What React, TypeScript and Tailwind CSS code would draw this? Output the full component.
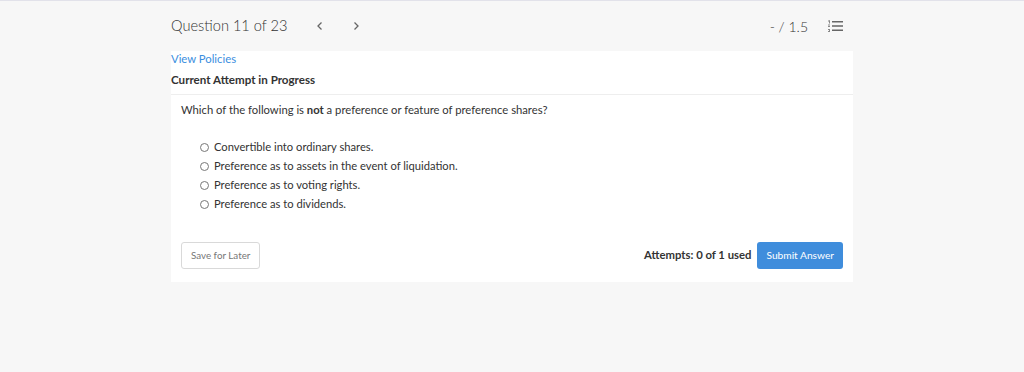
import React from "react";

export default function App() {
  const options = [
    "Convertible into ordinary shares.",
    "Preference as to assets in the event of liquidation.",
    "Preference as to voting rights.",
    "Preference as to dividends.",
  ];
  return (
    <div
      className="min-h-[372px] bg-[#f7f7f7] border-t border-[#e2e2ea] text-[#333]"
      style={{ fontFamily: "Lato, 'Open Sans', sans-serif" }}
    >
      <div className="w-[682px] mx-auto">
        <div className="h-[50px] flex items-center justify-between">
          <div className="flex items-center">
            <span className="text-[14.6px] font-light text-[#333]">Question 11 of 23</span>
            <svg className="ml-[29px]" width="8" height="10" viewBox="0 0 8 10">
              <path d="M5.5 1.5 L2 5 L5.5 8.5" fill="none" stroke="#666" strokeWidth="1.3" />
            </svg>
            <svg className="ml-[28px]" width="8" height="10" viewBox="0 0 8 10">
              <path d="M2.5 1.5 L6 5 L2.5 8.5" fill="none" stroke="#666" strokeWidth="1.3" />
            </svg>
          </div>
          <div className="flex items-center pr-[10px]">
            <span className="text-[14px] font-light text-[#333]">- / 1.5</span>
            <svg className="ml-[20px]" width="15" height="12" viewBox="0 0 15 12">
              <rect x="0" y="0.5" width="2" height="1" fill="#888" />
              <rect x="1" y="0.5" width="1" height="3" fill="#888" />
              <rect x="0" y="4.5" width="2" height="1" fill="#888" />
              <rect x="0" y="6" width="2" height="1" fill="#888" />
              <rect x="0" y="9" width="2" height="1" fill="#888" />
              <rect x="1" y="9" width="1" height="3" fill="#888" />
              <rect x="0" y="11" width="2" height="1" fill="#888" />
              <rect x="4" y="1" width="11" height="1.5" fill="#666" />
              <rect x="4" y="5.25" width="11" height="1.5" fill="#666" />
              <rect x="4" y="9.5" width="11" height="1.5" fill="#666" />
            </svg>
          </div>
        </div>
        <div className="bg-white pb-[13px]">
          <div className="pt-[1px] text-[11.3px] leading-[14px] text-[#3b8ee0]">View Policies</div>
          <div className="mt-[7px] text-[11.6px] leading-[14px] font-bold text-[#333]">Current Attempt in Progress</div>
          <div className="mt-[7px] border-t border-[#eeeeee]" />
          <div className="px-[10px]">
            <div className="mt-[8px] text-[11.25px] leading-[14px] text-[#333]">
              Which of the following is <b>not</b> a preference or feature of preference shares?
            </div>
            <div className="mt-[23px] pl-[19px] flex flex-col gap-[5px]">
              {options.map((o) => (
                <label key={o} className="flex items-center h-[14px] text-[11.2px] text-[#333]">
                  <span className="w-[9px] h-[9px] rounded-full border border-[#777] mr-[5px]" />
                  {o}
                </label>
              ))}
            </div>
            <div className="mt-[31px] flex items-center justify-between">
              <button className="h-[27px] px-[9px] border border-[#d9d9d9] rounded-[3px] text-[9.8px] text-[#777] bg-white">
                Save for Later
              </button>
              <div className="flex items-center">
                <span className="text-[11.3px] font-bold text-[#333] mr-[6px]">Attempts: 0 of 1 used</span>
                <button className="h-[27px] px-[9px] rounded-[3px] text-[10.2px] text-white bg-[#3f8ddc]">
                  Submit Answer
                </button>
              </div>
            </div>
          </div>
        </div>
      </div>
    </div>
  );
}
